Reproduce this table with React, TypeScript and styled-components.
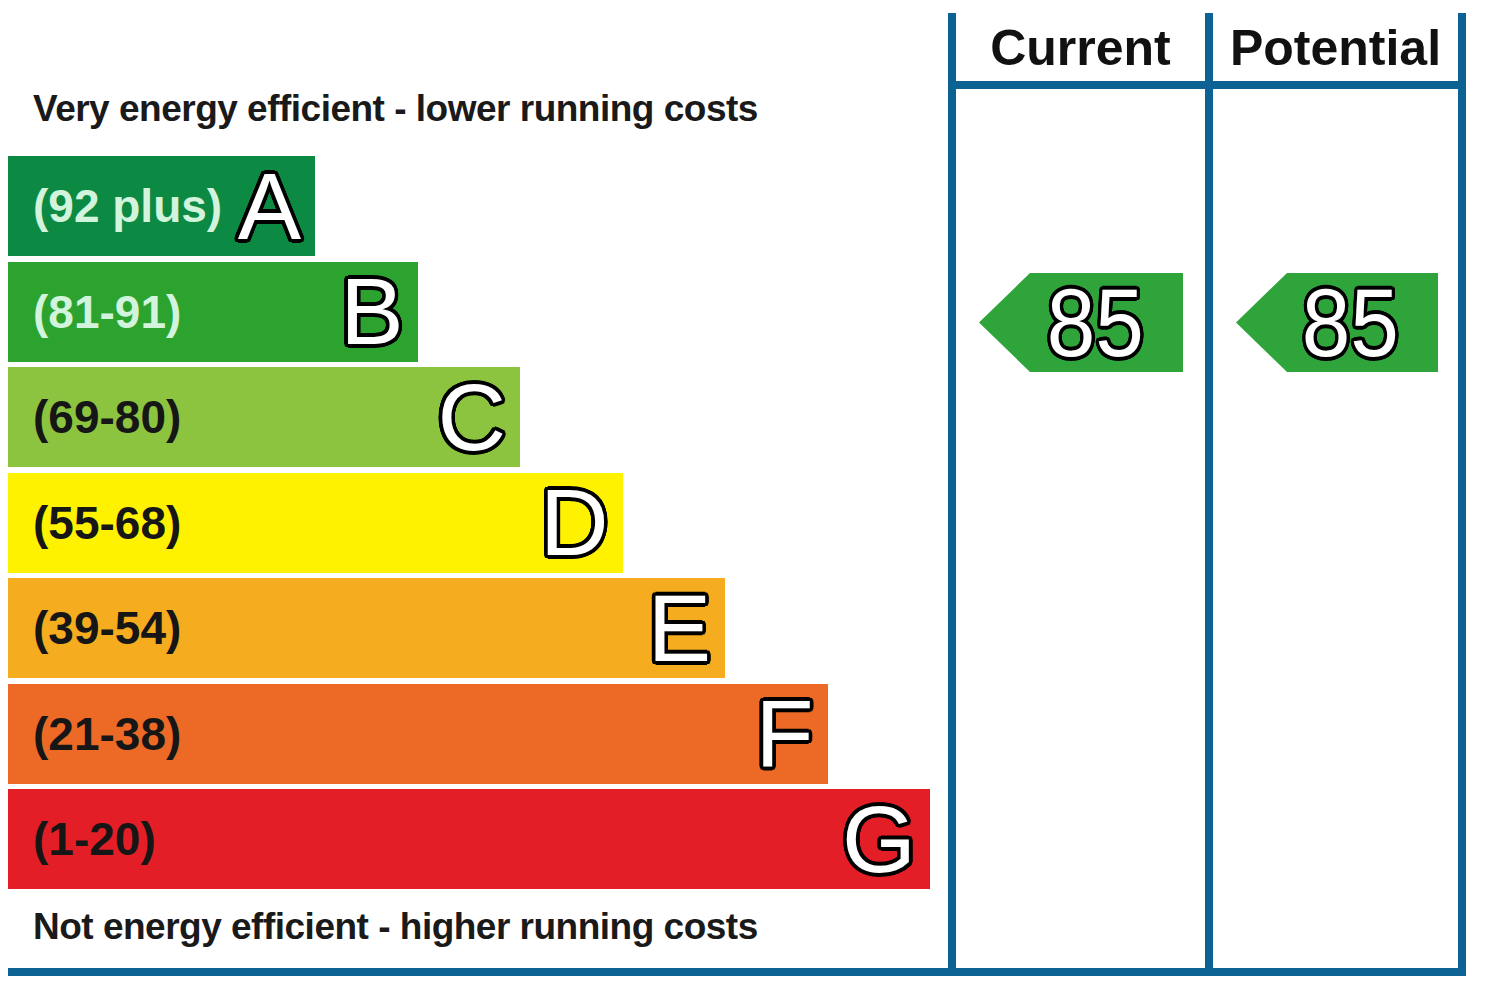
import * as React from 'react';
import styled, { createGlobalStyle } from 'styled-components';

const BLUE = '#0d6294';

const GlobalStyle = createGlobalStyle`
  html, body {
    margin: 0;
    padding: 0;
    background: #ffffff;
  }
  body {
    font-family: "Liberation Sans", Arial, sans-serif;
  }
`;

const bands = [
  { range: '(92 plus)', letter: 'A', color: '#0c8a44', light: true },
  { range: '(81-91)', letter: 'B', color: '#2ca32f', light: true },
  { range: '(69-80)', letter: 'C', color: '#8cc43f', light: false },
  { range: '(55-68)', letter: 'D', color: '#fff200', light: false },
  { range: '(39-54)', letter: 'E', color: '#f6ac1f', light: false },
  { range: '(21-38)', letter: 'F', color: '#ec6a25', light: false },
  { range: '(1-20)', letter: 'G', color: '#e31e26', light: false },
];

const columns = [
  { title: 'Current', value: 85 },
  { title: 'Potential', value: 85 },
];

// black ring round white glyphs, built from offset shadows
const outline = (r: number) => {
  const steps = 24;
  const parts: string[] = [];
  for (let i = 0; i < steps; i++) {
    const a = (i / steps) * Math.PI * 2;
    parts.push(`${(Math.cos(a) * r).toFixed(2)}px ${(Math.sin(a) * r).toFixed(2)}px 0 #000`);
    parts.push(`${(Math.cos(a) * r * 0.55).toFixed(2)}px ${(Math.sin(a) * r * 0.55).toFixed(2)}px 0 #000`);
  }
  return parts.join(', ');
};

const Page = styled.div`
  width: 1500px;
  height: 1000px;
  padding: 13px 0 0 8px;
  box-sizing: border-box;
`;

const Frame = styled.div`
  display: flex;
  width: 1458px;
  height: 963px;
  box-sizing: border-box;
  border-bottom: 8px solid ${BLUE};
`;

const Chart = styled.div`
  width: 940px;
  display: flex;
  flex-direction: column;
`;

const Caption = styled.div<{ $top: number }>`
  margin-top: ${(p) => p.$top}px;
  padding-left: 25px;
  font-size: 37px;
  line-height: 37px;
  font-weight: 700;
  letter-spacing: -0.5px;
  color: #1a1a1a;
  white-space: nowrap;
`;

const Bars = styled.div`
  margin-top: 29px;
  display: flex;
  flex-direction: column;
  gap: 5.5px;
`;

const Bar = styled.div<{ $color: string; $width: number }>`
  width: ${(p) => p.$width}px;
  height: 100px;
  background: ${(p) => p.$color};
  display: flex;
  align-items: center;
  justify-content: space-between;
  padding: 0 14px 0 25px;
  box-sizing: border-box;
`;

const Range = styled.span<{ $light: boolean }>`
  font-size: 46px;
  font-weight: 700;
  color: ${(p) => (p.$light ? '#d2f4dc' : '#161616')};
  white-space: nowrap;
`;

const Letter = styled.span`
  font-size: 95px;
  line-height: 1;
  font-weight: 400;
  color: #ffffff;
  text-shadow: ${outline(3.6)};
`;

const RatingColumn = styled.div<{ $last: boolean }>`
  display: flex;
  flex-direction: column;
  width: ${(p) => (p.$last ? 261 : 257)}px;
  box-sizing: border-box;
  border-left: 8px solid ${BLUE};
  border-right: ${(p) => (p.$last ? `8px solid ${BLUE}` : 'none')};
`;

const Header = styled.div`
  height: 76px;
  box-sizing: border-box;
  border-bottom: 8px solid ${BLUE};
  display: flex;
  align-items: center;
  justify-content: center;
  padding-top: 2px;
  font-size: 50px;
  font-weight: 700;
  color: #111111;
`;

const Arrow = styled.div<{ $width: number }>`
  margin: 184px 0 0 23px;
  width: ${(p) => p.$width}px;
  height: 99px;
  background: #2ea43a;
  clip-path: polygon(0 50%, 51px 0, 100% 0, 100% 100%, 51px 100%);
  display: flex;
  align-items: center;
  justify-content: flex-end;
  padding-right: 39px;
  box-sizing: border-box;
`;

const Score = styled.span`
  display: inline-block;
  font-size: 97px;
  line-height: 1;
  color: #ffffff;
  transform: scaleX(0.9);
  transform-origin: right center;
  text-shadow: ${outline(3.6)};
`;

export default function App() {
  return (
    <Page>
      <GlobalStyle />
      <Frame>
        <Chart>
          <Caption $top={77}>Very energy efficient - lower running costs</Caption>
          <Bars>
            {bands.map((b, i) => (
              <Bar key={b.letter} $color={b.color} $width={307 + i * 102.5}>
                <Range $light={b.light}>{b.range}</Range>
                <Letter>{b.letter}</Letter>
              </Bar>
            ))}
          </Bars>
          <Caption $top={19}>Not energy efficient - higher running costs</Caption>
        </Chart>
        {columns.map((c, i) => (
          <RatingColumn key={c.title} $last={i === columns.length - 1}>
            <Header>{c.title}</Header>
            <Arrow $width={i === 0 ? 204 : 202}>
              <Score>{c.value}</Score>
            </Arrow>
          </RatingColumn>
        ))}
      </Frame>
    </Page>
  );
}
